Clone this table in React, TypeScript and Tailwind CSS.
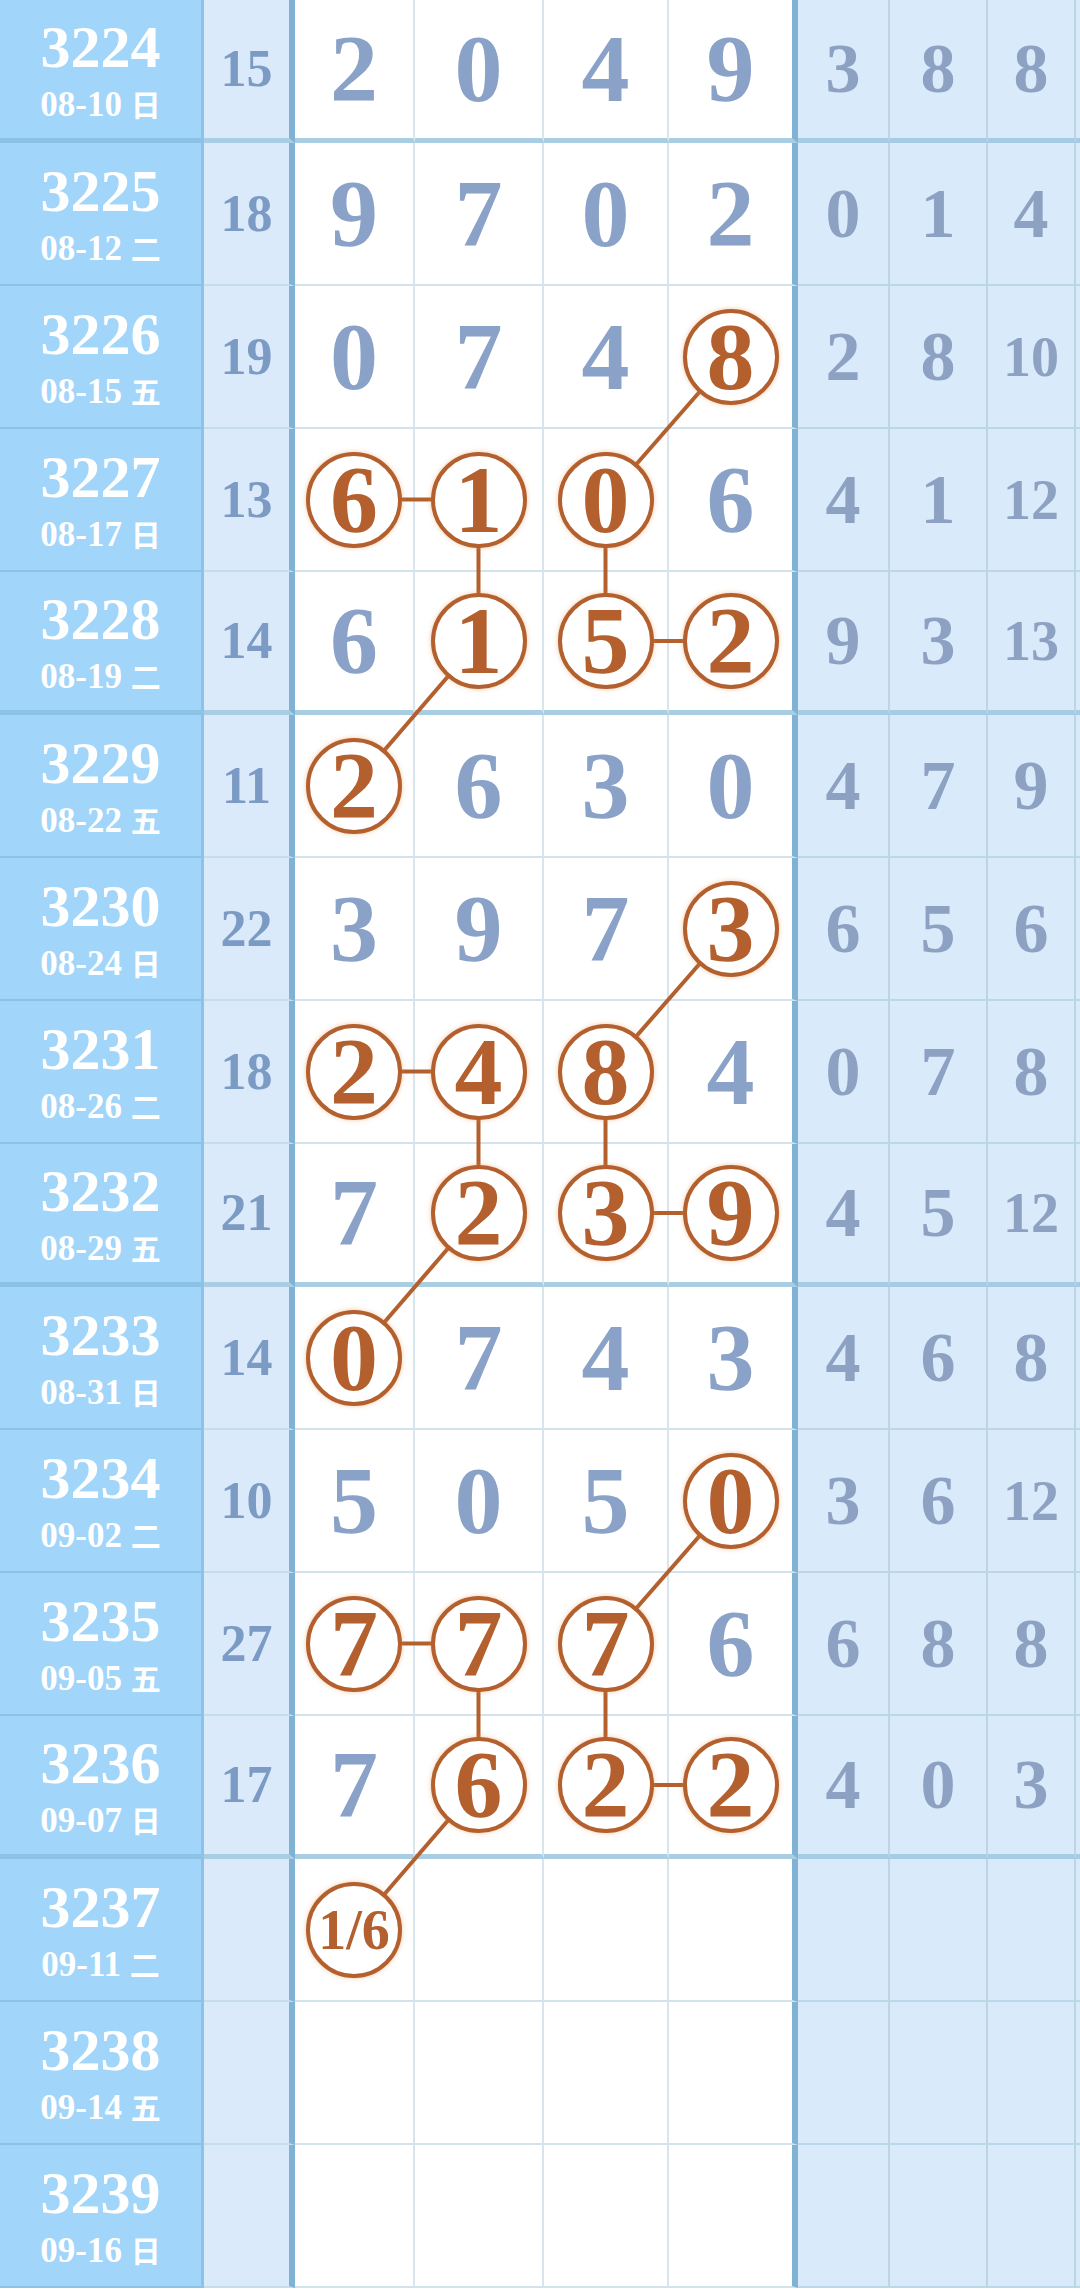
type Row = {
  id: number
  date: string
  wd: string
  sum?: number
  d?: number[]
  r?: number[]
}

const ROWS: Row[] = [
  { id: 3224, date: "08-10", wd: "日", sum: 15, d: [2, 0, 4, 9], r: [3, 8, 8] },
  { id: 3225, date: "08-12", wd: "二", sum: 18, d: [9, 7, 0, 2], r: [0, 1, 4] },
  { id: 3226, date: "08-15", wd: "五", sum: 19, d: [0, 7, 4, 8], r: [2, 8, 10] },
  { id: 3227, date: "08-17", wd: "日", sum: 13, d: [6, 1, 0, 6], r: [4, 1, 12] },
  { id: 3228, date: "08-19", wd: "二", sum: 14, d: [6, 1, 5, 2], r: [9, 3, 13] },
  { id: 3229, date: "08-22", wd: "五", sum: 11, d: [2, 6, 3, 0], r: [4, 7, 9] },
  { id: 3230, date: "08-24", wd: "日", sum: 22, d: [3, 9, 7, 3], r: [6, 5, 6] },
  { id: 3231, date: "08-26", wd: "二", sum: 18, d: [2, 4, 8, 4], r: [0, 7, 8] },
  { id: 3232, date: "08-29", wd: "五", sum: 21, d: [7, 2, 3, 9], r: [4, 5, 12] },
  { id: 3233, date: "08-31", wd: "日", sum: 14, d: [0, 7, 4, 3], r: [4, 6, 8] },
  { id: 3234, date: "09-02", wd: "二", sum: 10, d: [5, 0, 5, 0], r: [3, 6, 12] },
  { id: 3235, date: "09-05", wd: "五", sum: 27, d: [7, 7, 7, 6], r: [6, 8, 8] },
  { id: 3236, date: "09-07", wd: "日", sum: 17, d: [7, 6, 2, 2], r: [4, 0, 3] },
  { id: 3237, date: "09-11", wd: "二" },
  { id: 3238, date: "09-14", wd: "五" },
  { id: 3239, date: "09-16", wd: "日" },
]

const ROW_H = 143
const THICK = [0, 4, 8, 12]

// white columns: left edge, width, right border
const WCOLS = [
  { x: 295, w: 120, br: 2 },
  { x: 415, w: 129, br: 2 },
  { x: 544, w: 125, br: 2 },
  { x: 669, w: 129, br: 6 },
]
const RCOLS = [92, 98, 88]

const GROUPS = [2, 6, 10]

const circled = new Set<string>()
const links: [number, number, number, number][] = []
GROUPS.forEach((g) => {
  ;[
    [g, 3],
    [g + 1, 0],
    [g + 1, 1],
    [g + 1, 2],
    [g + 2, 1],
    [g + 2, 2],
    [g + 2, 3],
    [g + 3, 0],
  ].forEach(([r, c]) => circled.add(`${r}-${c}`))
  links.push(
    [g, 3, g + 1, 2],
    [g + 1, 0, g + 1, 1],
    [g + 1, 1, g + 2, 1],
    [g + 1, 2, g + 2, 2],
    [g + 2, 2, g + 2, 3],
    [g + 2, 1, g + 3, 0]
  )
})

const cx = (c: number) => WCOLS[c].x + (WCOLS[c].w - WCOLS[c].br) / 2
const cy = (r: number) => r * ROW_H + (ROW_H - (THICK.includes(r) ? 5 : 2)) / 2

function Ball({ label }: { label: string }) {
  const small = label.length > 1
  return (
    <div className="relative z-10 flex h-[96px] w-[96px] shrink-0 items-center justify-center rounded-full border-[4px] border-[#b3602e] bg-white text-[#b3602e] shadow-[0_0_5px_rgba(225,135,60,0.45)]">
      <span className={small ? "text-[56px] leading-none" : "text-[96px] leading-none"}>{label}</span>
    </div>
  )
}

export default function App() {
  return (
    <div className="relative h-[2289px] w-[1080px] overflow-hidden bg-white font-['Liberation_Serif','Noto_Sans_CJK_SC',serif] font-bold">
      {ROWS.map((row, i) => {
        const thick = THICK.includes(i)
        const bb = thick ? "border-b-[5px]" : "border-b-[2px]"
        return (
          <div key={row.id} className="flex h-[143px]">
            {/* issue + date */}
            <div
              className={`flex w-[204px] shrink-0 flex-col items-center justify-center gap-[10px] border-r-[3px] border-r-[#8dc2e6] bg-[#a1d5f9] text-white ${bb} border-b-[#8cc2e6]`}
            >
              <div className="text-[60px] leading-none">{row.id}</div>
              <div className="text-[35px] leading-none">
                {row.date} <span className="font-['Noto_Sans_CJK_SC',sans-serif] text-[30px]">{row.wd}</span>
              </div>
            </div>

            {/* sum */}
            <div
              className={`flex w-[91px] shrink-0 items-center justify-center border-r-[6px] border-r-[#80b2d5] bg-[#dbeafa] text-[52px] leading-none text-[#7b9bc4] ${bb} ${
                thick ? "border-b-[#a9cde3]" : "border-b-[#c4dcee]"
              }`}
            >
              {row.sum ?? ""}
            </div>

            {/* digits */}
            {WCOLS.map((col, c) => {
              const key = `${i}-${c}`
              const val = row.d ? String(row.d[c]) : i === 13 && c === 0 ? "1/6" : ""
              return (
                <div
                  key={c}
                  style={{ width: col.w }}
                  className={`flex shrink-0 items-center justify-center bg-white text-[96px] leading-none text-[#8aa2c8] ${bb} ${
                    thick ? "border-b-[#a9cde3]" : "border-b-[#d2e3ec]"
                  } ${c === 3 ? "border-r-[6px] border-r-[#80b2d5]" : "border-r-[2px] border-r-[#d8e5ec]"}`}
                >
                  {circled.has(key) ? <Ball label={val} /> : val}
                </div>
              )
            })}

            {/* tail */}
            {RCOLS.map((w, c) => {
              const v = row.r ? row.r[c] : undefined
              return (
                <div
                  key={c}
                  style={{ width: w }}
                  className={`flex shrink-0 items-center justify-center border-r-[2px] border-r-[#bcd4e8] bg-[#d9eafa] leading-none text-[#8da2c3] ${bb} ${
                    thick ? "border-b-[#a6cbe4]" : "border-b-[#bcd6ea]"
                  } ${v !== undefined && v > 9 ? "text-[56px]" : "text-[70px]"}`}
                >
                  {v ?? ""}
                </div>
              )
            })}
            <div className={`flex-1 bg-[#d9eafa] ${bb} ${thick ? "border-b-[#a6cbe4]" : "border-b-[#bcd6ea]"}`} />
          </div>
        )
      })}

      {/* trend lines */}
      <svg className="pointer-events-none absolute left-0 top-0 z-[1]" width={1080} height={2289}>
        {links.map(([r1, c1, r2, c2], k) => (
          <line key={k} x1={cx(c1)} y1={cy(r1)} x2={cx(c2)} y2={cy(r2)} stroke="#b3602e" strokeWidth={4} />
        ))}
      </svg>
    </div>
  )
}
